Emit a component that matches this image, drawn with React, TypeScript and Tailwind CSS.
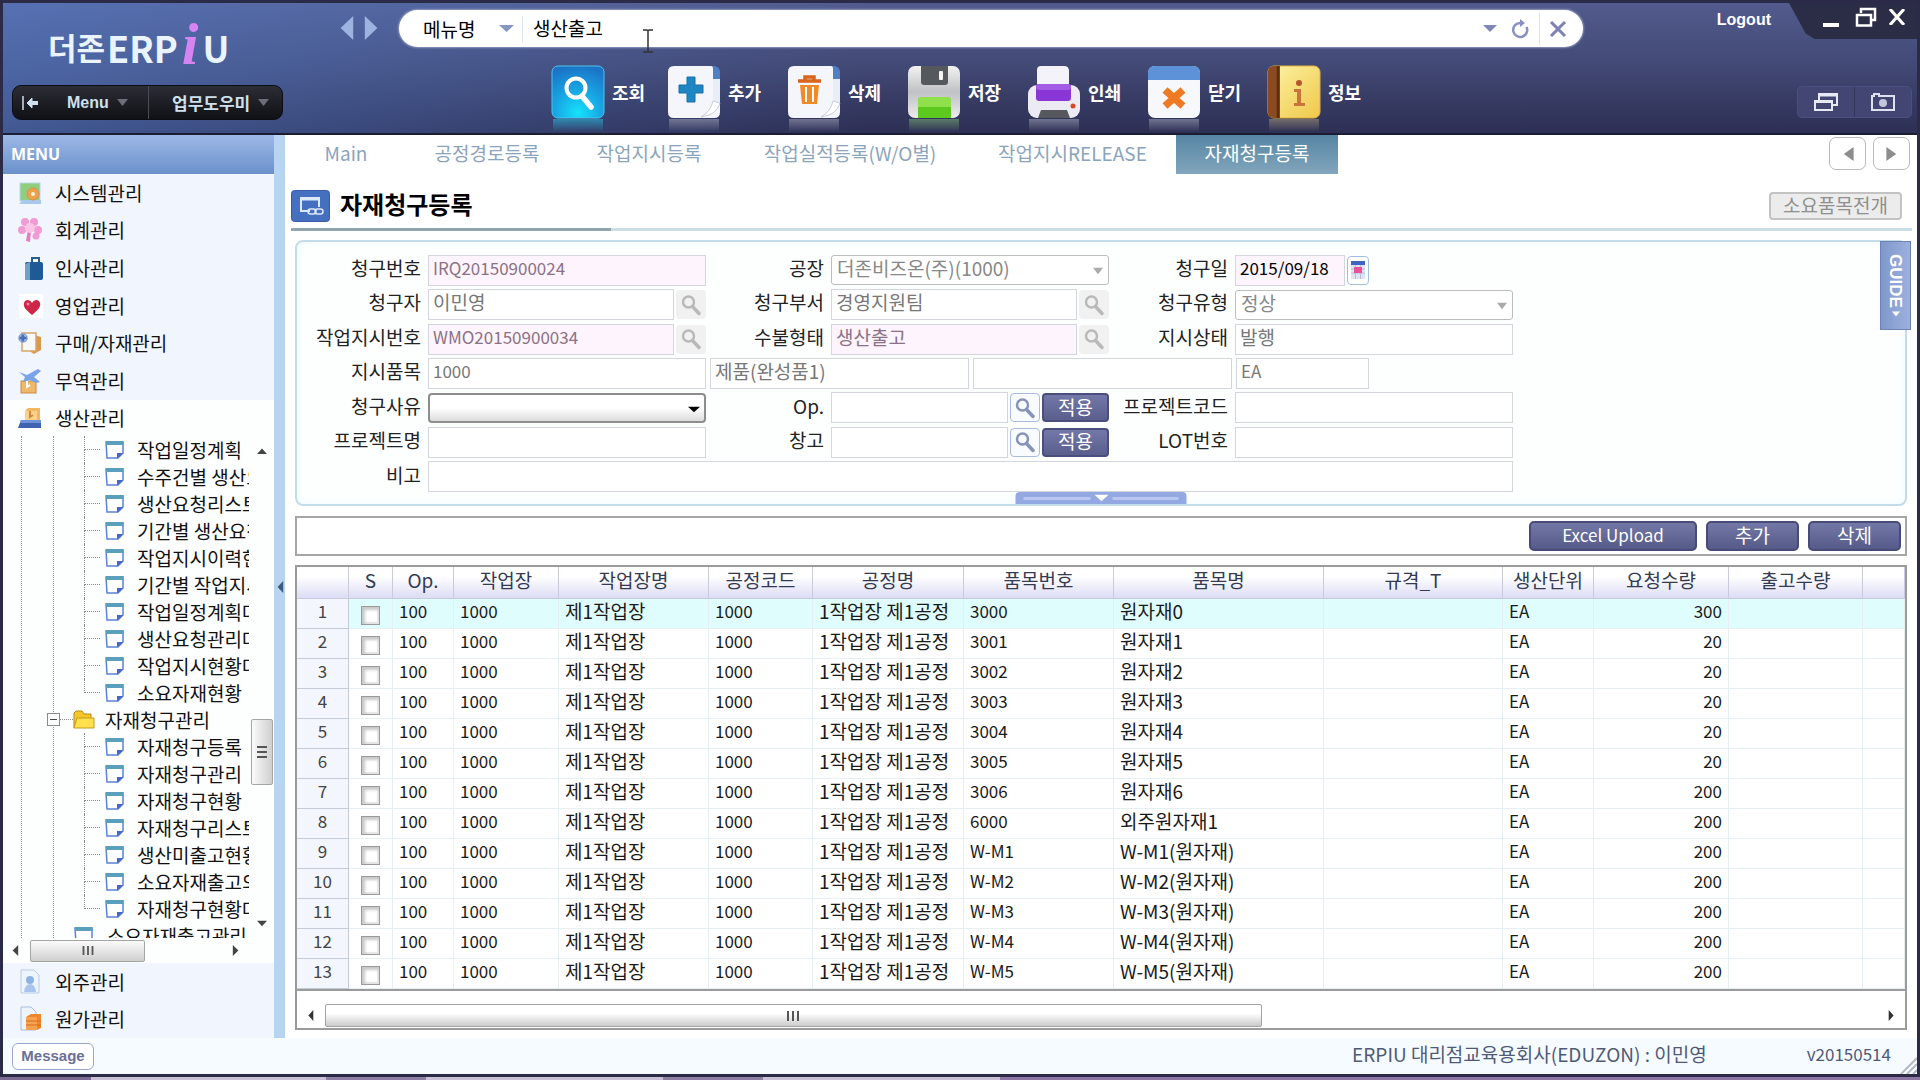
import React from "react";

/* ---------- small shared drawings ---------- */

type TriProps = { dir: "up" | "down" | "left" | "right"; className: string };

const triPoints = {
  up: "0,10 10,10 5,2",
  down: "0,1 10,1 5,9",
  left: "9,0 9,10 2,5",
  right: "1,0 1,10 8,5",
};

function Tri({ dir, className }: TriProps) {
  return (
    <svg viewBox="0 0 10 10" preserveAspectRatio="none" className={className} fill="currentColor" aria-hidden="true">
      <polygon points={triPoints[dir]} />
    </svg>
  );
}

function Magnifier({ className }: { className: string }) {
  return (
    <svg viewBox="0 0 24 24" className={className} fill="none" stroke="currentColor" aria-hidden="true">
      <circle cx="9.500" cy="9" r="5.500" strokeWidth="2.500" />
      <path d="M13.500 13.500 L20 20.500" strokeWidth="3.500" strokeLinecap="round" />
    </svg>
  );
}

/* ---------- header toolbar icons ---------- */

function SearchTool() {
  return (
    <svg viewBox="0 0 54 54" className="h-[54px] w-[54px]" aria-hidden="true">
      <defs>
        <radialGradient id="gSearch" cx="0.5" cy="0.9" r="0.9">
          <stop offset="0" stopColor="#14e3fb" />
          <stop offset="0.5" stopColor="#18a5e4" />
          <stop offset="1" stopColor="#1b74c6" />
        </radialGradient>
      </defs>
      <rect x="1" y="1" width="52" height="52" rx="6" fill="url(#gSearch)" stroke="#4fc4f0" />
      <circle cx="25" cy="23" r="9.500" fill="none" stroke="#fff" strokeWidth="4" />
      <path d="M31 31 L40 42" stroke="#fff" strokeWidth="5.500" strokeLinecap="round" />
    </svg>
  );
}

function Paper() {
  return (
    <>
      <rect x="10" y="1" width="43" height="50" rx="6" fill="#4f7fc4" />
      <path d="M7 1 H44 Q46 1 46 4 V14 H53 V47 Q53 53 47 53 H7 Q1 53 1 47 V7 Q1 1 7 1Z" fill="#f4f6fb" />
      <path d="M46 14 V34 Q44 46 34 52 Q48 50 53 38 V14Z" fill="#e9edf5" />
      <path d="M34 52 Q44 46 46 36 L53 38 Q50 50 34 52Z" fill="#fff" stroke="#b9c2d4" strokeWidth="0.8" />
    </>
  );
}

function AddTool() {
  return (
    <svg viewBox="0 0 54 54" className="h-[54px] w-[54px]" aria-hidden="true">
      <Paper />
      <path d="M20 12 H28 V20 H36 V28 H28 V37 H20 V28 H12 V20 H20Z" fill="#1f86c4" stroke="#1a6ea8" />
    </svg>
  );
}

function DeleteTool() {
  return (
    <svg viewBox="0 0 54 54" className="h-[54px] w-[54px]" aria-hidden="true">
      <Paper />
      <path d="M11 16 H34 M18 16 V12 H27 V16" fill="none" stroke="#d9641c" strokeWidth="3.500" />
      <path d="M13 20 H32 L30 39 H15Z" fill="#f08a28" />
      <path d="M19 22 V37 M26 22 V37" stroke="#fff" strokeWidth="2" />
    </svg>
  );
}

function SaveTool() {
  return (
    <svg viewBox="0 0 54 54" className="h-[54px] w-[54px]" aria-hidden="true">
      <defs>
        <linearGradient id="gSave" x1="0" y1="0" x2="0" y2="1">
          <stop offset="0" stopColor="#f2f2f2" />
          <stop offset="0.5" stopColor="#bfc1c4" />
          <stop offset="1" stopColor="#ececec" />
        </linearGradient>
      </defs>
      <rect x="1" y="1" width="52" height="52" rx="7" fill="url(#gSave)" />
      <path d="M14 1 H41 V17 Q41 20 38 20 H17 Q14 20 14 17Z" fill="#55585c" />
      <rect x="32" y="6" width="4" height="9" rx="1" fill="#f4f4f4" />
      <path d="M15 32 H40 Q44 32 44 36 V53 H11 V36 Q11 32 15 32Z" fill="#5cc91f" />
      <path d="M15 32 H40 Q44 32 44 36 V42 H11 V36 Q11 32 15 32Z" fill="#8fe04b" />
    </svg>
  );
}

function PrintTool() {
  return (
    <svg viewBox="0 0 54 54" className="h-[54px] w-[54px]" aria-hidden="true">
      <rect x="1" y="20" width="52" height="33" rx="9" fill="#eceaf2" />
      <path d="M14 1 H37 Q42 1 42 6 V22 H10 V5 Q10 1 14 1Z" fill="#f5f3fa" />
      <rect x="9" y="19" width="35" height="17" rx="3" fill="#8a35d6" />
      <rect x="9" y="19" width="35" height="6" rx="3" fill="#a35ce6" />
      <path d="M14 45 H40 L43 53 H11Z" fill="#57585e" />
      <circle cx="46" cy="41" r="2.500" fill="#d9482b" />
    </svg>
  );
}

function CloseTool() {
  return (
    <svg viewBox="0 0 54 54" className="h-[54px] w-[54px]" aria-hidden="true">
      <rect x="1" y="1" width="52" height="52" rx="7" fill="#f6f8fc" />
      <path d="M8 1 H46 Q53 1 53 8 V15 H1 V8 Q1 1 8 1Z" fill="#5d92d8" />
      <path d="M18 25 L36 41 M36 25 L18 41" stroke="#ee7a23" strokeWidth="7.500" />
    </svg>
  );
}

function InfoTool() {
  return (
    <svg viewBox="0 0 54 54" className="h-[54px] w-[54px]" aria-hidden="true">
      <defs>
        <linearGradient id="gInfo" x1="0" y1="0" x2="1" y2="1">
          <stop offset="0" stopColor="#fdf3a6" />
          <stop offset="1" stopColor="#efc84a" />
        </linearGradient>
      </defs>
      <rect x="1" y="1" width="52" height="52" rx="6" fill="url(#gInfo)" stroke="#e0b440" />
      <path d="M7 1 H13 V53 H7 Q1 53 1 47 V7 Q1 1 7 1Z" fill="#8a4a22" />
      <path d="M11 1 V53" stroke="#5d2c12" strokeWidth="2.500" />
      <circle cx="32" cy="18" r="3" fill="#b4562a" />
      <path d="M27 24 H34 V38 H38 V41 H27 V38 H30 V27 H27Z" fill="#c8743a" />
    </svg>
  );
}

const tools = [
  { label: "조회", icon: <SearchTool />, glow: "from-[#2aa5c9]" },
  { label: "추가", icon: <AddTool />, glow: "from-[#8c8ea6]" },
  { label: "삭제", icon: <DeleteTool />, glow: "from-[#8c8ea6]" },
  { label: "저장", icon: <SaveTool />, glow: "from-[#6d9a6c]" },
  { label: "인쇄", icon: <PrintTool />, glow: "from-[#8c8ea6]" },
  { label: "닫기", icon: <CloseTool />, glow: "from-[#8c8ea6]" },
  { label: "정보", icon: <InfoTool />, glow: "from-[#8f8570]" },
];

function Header() {
  return (
    <header className="h-[132px] border-b-2 border-[#1b1d33] bg-linear-to-b from-[#525b8d] via-[#414874] to-[#2d2f54] text-white">
      <div className="flex h-full bg-linear-to-r from-[#5a8be0]/45 via-[#5a8be0]/25 via-20% to-transparent to-45%">
        <div className="flex w-[330px] shrink-0 flex-col justify-between pb-[13px] pl-[9px]">
          <div className="flex h-[65px] items-end pl-[36px] text-[36px] leading-[42px] font-bold text-[#eaf4ff]">
            <span className="text-[31px]">더존</span>
            <span className="pl-0.5">ERP</span>
            <span className="px-1 font-['Liberation_Serif',serif] text-[60px] leading-[48px] text-[#d684f2] italic">i</span>
            <span>U</span>
          </div>
          <div className="flex h-[35px] w-[271px] rounded-[9px] border border-[#0c0d12] bg-linear-to-b from-[#2c2e36] to-[#101116] text-[16px] font-bold text-[#cfe0ee]">
            <button className="flex w-[136px] items-center border-r border-[#494b55] pl-[9px]">
              <svg viewBox="0 0 18 14" className="h-[14px] w-[18px]" fill="none" stroke="currentColor" strokeWidth="2" aria-hidden="true">
                <path d="M1 0 V14" strokeWidth="1.500" />
                <path d="M16 7 H8" strokeWidth="4" />
                <path d="M5 7 L10 2 V12Z" fill="currentColor" strokeWidth="1" />
              </svg>
              <span className="pl-[27px] font-['Liberation_Sans',sans-serif]">Menu</span>
              <Tri dir="down" className="ml-2 h-[9px] w-[11px] text-[#6b6e79]" />
            </button>
            <button className="flex flex-1 items-center pl-[23px]">
              <span className="text-[17px]">업무도우미</span>
              <Tri dir="down" className="ml-2 h-[9px] w-[11px] text-[#6b6e79]" />
            </button>
          </div>
        </div>

        <div className="flex min-w-0 flex-1 flex-col">
          <div className="flex items-start pt-[7px]">
            <button aria-label="이전" className="mt-1.5 ml-1">
              <Tri dir="left" className="h-6 w-[18px] text-[#9db3e0]" />
            </button>
            <button aria-label="다음" className="mt-1.5 ml-2">
              <Tri dir="right" className="h-6 w-[18px] text-[#9db3e0]" />
            </button>
            <div className="ml-[18px] flex h-[37px] min-w-0 flex-1 items-center rounded-full bg-white pl-[24px] text-[19px] text-black shadow-[0_0_2px_1px_#8f98bb]">
              <div className="relative flex w-[100px] items-center border-r border-[#dde6f0]">
                <select aria-label="검색 구분" className="w-full appearance-none bg-transparent leading-[26px] outline-none">
                  <option>메뉴명</option>
                </select>
                <Tri dir="down" className="pointer-events-none absolute right-2 h-[9px] w-[15px] text-[#8796c4]" />
              </div>
              <div className="relative min-w-0 flex-1">
                <input aria-label="메뉴 검색" defaultValue="생산출고" className="w-full pl-[10px] leading-[26px] outline-none" />
                <svg viewBox="0 0 10 24" className="absolute top-[15px] left-[120px] h-6 w-[10px]" fill="none" stroke="#333" strokeWidth="1.500" aria-hidden="true">
                  <path d="M0 1 H4 L5 2 L6 1 H10 M5 2 V22 M0 23 H4 L5 22 L6 23 H10" />
                </svg>
              </div>
              <Tri dir="down" className="h-[9px] w-[14px] text-[#8186b8]" />
              <button aria-label="새로고침" className="ml-[13px]">
                <svg viewBox="0 0 20 20" className="h-5 w-5" fill="none" stroke="#8b90c0" strokeWidth="2.500" aria-hidden="true">
                  <path d="M16.500 8 A7 7 0 1 1 10.500 4" />
                  <path d="M10 0 L15 4 L10 8Z" fill="#8b90c0" stroke="none" />
                </svg>
              </button>
              <button aria-label="지우기" className="mr-[16px] ml-[9px] border-l border-[#dde2ee] py-2 pl-[9px]">
                <svg viewBox="0 0 16 16" className="h-[16px] w-[18px]" stroke="#7d82b4" strokeWidth="3" aria-hidden="true">
                  <path d="M1 1 L15 15 M15 1 L1 15" />
                </svg>
              </button>
            </div>
          </div>

          <div className="mt-[18px] flex pl-[218px]">
            {tools.map((t, i) => (
              <div key={t.label} className={i === 0 ? "w-[116px] shrink-0" : "w-[120px] shrink-0"}>
                <button className="flex items-center gap-[7px] text-[18px] font-bold whitespace-nowrap">
                  {t.icon}
                  <span>{t.label}</span>
                </button>
                <div className={`ml-0.5 h-[13px] w-[50px] bg-linear-to-b to-transparent opacity-70 ${t.glow}`} />
              </div>
            ))}
          </div>
        </div>

        <div className="flex w-[334px] shrink-0 flex-col items-end justify-between pb-[15px]">
          <div className="flex items-start">
            <a href="#logout" className="mt-[5px] mr-[18px] font-['Liberation_Sans',sans-serif] text-[16px] font-bold">
              Logout
            </a>
            <div className="flex h-[36px] w-[128px] items-center bg-[#2b2d47] pb-2 pl-[34px] [clip-path:polygon(0_0,100%_0,100%_100%,20%_100%,13%_85%)]">
              <button aria-label="최소화" className="mt-[16px] h-1 w-4 bg-white" />
              <button aria-label="이전 크기로" className="ml-[16px]">
                <svg viewBox="0 0 22 20" className="h-5 w-[22px]" fill="none" stroke="#fff" strokeWidth="2.500" aria-hidden="true">
                  <path d="M6 6 V2 H20 V13 H16" />
                  <rect x="2" y="8" width="14" height="10.500" />
                </svg>
              </button>
              <button aria-label="창 닫기" className="ml-[12px]">
                <svg viewBox="0 0 16 16" className="h-4 w-4" stroke="#fff" strokeWidth="3" aria-hidden="true">
                  <path d="M1 0 L15 16 M15 0 L1 16" />
                </svg>
              </button>
            </div>
          </div>
          <div className="mr-[5px] flex h-[32px] w-[115px] rounded-[5px] border border-[#4c5080] bg-[#434673]">
            <button aria-label="창 목록" className="flex flex-1 items-center justify-center border-r border-[#33355c]">
              <svg viewBox="0 0 26 20" className="h-5 w-[26px]" fill="none" stroke="#e6e8f6" strokeWidth="2" aria-hidden="true">
                <path d="M6 8 V2 H24 V13 H19" />
                <path d="M6 3 H24" strokeWidth="3" />
                <rect x="2" y="9" width="17" height="9" />
                <path d="M2 9.500 H19" strokeWidth="3" />
              </svg>
            </button>
            <button aria-label="화면 캡처" className="flex flex-1 items-center justify-center">
              <svg viewBox="0 0 24 18" className="h-[18px] w-6" fill="none" stroke="#dfe1f0" strokeWidth="2" aria-hidden="true">
                <path d="M1 3 H3 V1 H8 V3 H23 V17 H1Z" />
                <circle cx="12" cy="10" r="4" fill="#c3c6dd" stroke="none" />
              </svg>
            </button>
          </div>
        </div>
      </div>
    </header>
  );
}

/* ---------- sidebar ---------- */

const sideIcon = "h-[26px] w-[26px]";

const icons = {
  system: (
    <svg viewBox="0 0 26 26" className={sideIcon} aria-hidden="true">
      <rect x="3" y="3" width="20" height="18" fill="#8fce7c" stroke="#b9d6ec" />
      <path d="M2 24 L6 20 H24 V24Z" fill="#a9c8ef" />
      <circle cx="16" cy="14" r="6" fill="#f0a04a" stroke="#d98f45" />
      <circle cx="16" cy="14" r="2" fill="#fff2dc" />
    </svg>
  ),
  flower: (
    <svg viewBox="0 0 26 26" className={sideIcon} fill="#f29ad3" aria-hidden="true">
      <circle cx="8" cy="5" r="4" />
      <circle cx="17" cy="5" r="4" />
      <circle cx="21" cy="13" r="4" />
      <circle cx="5" cy="13" r="4" />
      <circle cx="19" cy="19" r="3.500" />
      <path d="M11 12 L9 24 L13 25 L14 13Z" fill="#e77cc2" />
      <circle cx="13" cy="11" r="5" fill="#fbc4e6" />
    </svg>
  ),
  bag: (
    <svg viewBox="0 0 26 26" className={sideIcon} aria-hidden="true">
      <path d="M15 7 V3 H22 V7" fill="none" stroke="#2a5c8e" strokeWidth="2" />
      <rect x="8" y="7" width="18" height="18" rx="2" fill="#1f5a94" />
      <path d="M8 9 L13 7 V25 H8Z" fill="#6fa0cc" />
    </svg>
  ),
  heart: (
    <svg viewBox="0 0 26 26" className={sideIcon} aria-hidden="true">
      <rect x="2" y="1" width="24" height="24" fill="#fff" />
      <path d="M15 22 C9 17 6 14 7 10 C8 6 13 6 15 10 C17 6 22 6 23 10 C24 14 21 17 15 22Z" fill="#cf2648" />
      <circle cx="11" cy="11" r="1.500" fill="#f08aa0" />
    </svg>
  ),
  purchase: (
    <svg viewBox="0 0 26 26" className={sideIcon} aria-hidden="true">
      <path d="M14 4 L24 7 V20 L17 24 L14 22Z" fill="#d99a4e" />
      <rect x="5" y="3" width="14" height="18" fill="#f6f8fc" stroke="#d8a566" strokeWidth="1.500" />
      <path d="M2 8 H10 M6 4 V12" stroke="#4a6fb8" strokeWidth="3" />
      <circle cx="6" cy="8" r="4" fill="none" stroke="#7e9cd2" strokeWidth="1.500" />
    </svg>
  ),
  trade: (
    <svg viewBox="0 0 26 26" className={sideIcon} aria-hidden="true">
      <rect x="4" y="13" width="15" height="12" fill="#f0b86a" stroke="#c98b3d" />
      <path d="M10 13 V19 L13 17" fill="none" stroke="#fff" strokeWidth="2" />
      <path d="M2 4 L10 7 L21 1 L24 3 L17 9 L23 14 L19 15 L13 12 L6 14 L8 9Z" fill="#7aa4e8" />
    </svg>
  ),
  produce: (
    <svg viewBox="0 0 26 26" className={sideIcon} aria-hidden="true">
      <path d="M8 6 L11 3 H23 V15 H8Z" fill="#f2b75f" />
      <path d="M8 6 H20 V17 H8Z" fill="#ffd089" />
      <path d="M13 6 V12 L16 10" fill="none" stroke="#c98b3d" strokeWidth="2" />
      <path d="M1 23 L4 15 H24 V23Z" fill="#3e62b0" />
      <path d="M4 15 H24 V18 H3Z" fill="#6f92d6" />
    </svg>
  ),
  person: (
    <svg viewBox="0 0 26 26" className={sideIcon} aria-hidden="true">
      <path d="M4 1 H17 L22 6 V24 H4Z" fill="#eef4fd" stroke="#b9cbe6" />
      <circle cx="13" cy="11" r="4" fill="#8fb2e6" />
      <path d="M7 23 Q8 15 13 15 Q18 15 19 23Z" fill="#a9c5ee" />
    </svg>
  ),
  cost: (
    <svg viewBox="0 0 26 26" className={sideIcon} aria-hidden="true">
      <path d="M4 1 H14 L19 6 V24 H4Z" fill="#eef4fd" stroke="#a9bcda" />
      <path d="M9 11 L14 8 H24 V22 L20 24 H9Z" fill="#f0862c" />
      <path d="M9 11 H20 V24 H9Z" fill="#f7a250" />
      <path d="M9 15 H24 M9 19 H24" stroke="#d86c16" />
    </svg>
  ),
};

const topMenus = [
  { label: "시스템관리", icon: icons.system },
  { label: "회계관리", icon: icons.flower },
  { label: "인사관리", icon: icons.bag },
  { label: "영업관리", icon: icons.heart },
  { label: "구매/자재관리", icon: icons.purchase },
  { label: "무역관리", icon: icons.trade },
];

const bottomMenus = [
  { label: "외주관리", icon: icons.person },
  { label: "원가관리", icon: icons.cost },
];

const upperTree = [
  "작업일정계획",
  "수주건별 생산요청",
  "생산요청리스트",
  "기간별 생산요청",
  "작업지시이력현황",
  "기간별 작업지시",
  "작업일정계획대비",
  "생산요청관리대장",
  "작업지시현황대비",
  "소요자재현황",
];

const lowerTree = [
  "자재청구등록",
  "자재청구관리",
  "자재청구현황",
  "자재청구리스트",
  "생산미출고현황",
  "소요자재출고의뢰",
  "자재청구현황대비",
];

function DocIcon() {
  return (
    <svg viewBox="0 0 20 20" className="h-5 w-5 shrink-0" aria-hidden="true">
      <path d="M1 2 H18 V13 L13 18 H2 Z" fill="#fff" stroke="#5b83d6" strokeWidth="1.500" />
      <path d="M1 1 H18.500 V5 H1Z" fill="#5aa0bd" />
      <path d="M12 18.500 V13 H18.500Z" fill="#4667c8" />
    </svg>
  );
}

function MenuRow({ label, icon }: { label: string; icon: React.ReactNode }) {
  return (
    <button className="flex w-full items-center gap-3 pl-[14px] text-left">
      {icon}
      <span>{label}</span>
    </button>
  );
}

function Leaf({ label, last }: { label: string; last: boolean }) {
  return (
    <li className="flex h-[27px] items-center pl-[81px]">
      <span className="flex w-[21px] shrink-0 flex-col self-stretch">
        <span className="w-[16px] flex-1 border-b border-l border-dotted border-[#8a8a8a]" />
        <span className={last ? "flex-1" : "w-[16px] flex-1 border-l border-dotted border-[#8a8a8a]"} />
      </span>
      <DocIcon />
      <a href="#menu" className="shrink-0 pl-3 whitespace-nowrap">
        {label}
      </a>
    </li>
  );
}

function Grip({ className }: { className: string }) {
  return (
    <svg viewBox="0 0 12 10" className={className} stroke="#555" strokeWidth="2" aria-hidden="true">
      <path d="M1 0 V10 M6 0 V10 M11 0 V10" />
    </svg>
  );
}

function Sidebar() {
  return (
    <aside className="flex w-[271px] shrink-0 flex-col bg-[#f0f5fe] text-[19px] text-[#111]">
      <h2 className="flex h-[39px] items-center border-b border-[#6f92c8] bg-linear-to-b from-[#9db8e6] to-[#6c92cc] pl-2 font-['Open_Sans',sans-serif] text-[16px] font-bold text-white">
        MENU
      </h2>
      <nav className="grid h-[226px] grid-rows-6">
        {topMenus.map((m) => (
          <MenuRow key={m.label} label={m.label} icon={m.icon} />
        ))}
      </nav>
      <div className="flex flex-1 flex-col bg-[#fdfefe]">
        <div className="grid h-9">
          <MenuRow label="생산관리" icon={icons.produce} />
        </div>
        <div className="flex flex-1">
          <ul className="relative h-[502px] min-w-0 flex-1 overflow-hidden leading-[27px]">
            <li aria-hidden="true" className="absolute inset-y-0 left-[18px] border-l border-dotted border-[#999]" />
            <li aria-hidden="true" className="absolute inset-y-0 left-[50px] border-l border-dotted border-[#999]" />
            {upperTree.map((t, i) => (
              <Leaf key={t} label={t} last={i === upperTree.length - 1} />
            ))}
            <li className="relative flex h-[27px] items-center pl-[44px]">
              <button aria-label="접기" className="flex h-[13px] w-[13px] items-center justify-center border border-[#8a8a8a] bg-white">
                <span className="h-px w-[7px] bg-[#444]" />
              </button>
              <span className="w-[13px] border-b border-dotted border-[#8a8a8a]" />
              <svg viewBox="0 0 22 20" className="h-5 w-[22px] shrink-0" aria-hidden="true">
                <path d="M1 18 V3 L3 1 H9 L11 4 H18 V8" fill="#f3c62c" stroke="#b98a10" />
                <path d="M4 8 H21 V18 H1Z" fill="#ffe04d" stroke="#c79a18" />
              </svg>
              <a href="#menu" className="pl-[10px] whitespace-nowrap">
                자재청구관리
              </a>
            </li>
            {lowerTree.map((t, i) => (
              <Leaf key={t} label={t} last={i === lowerTree.length - 1} />
            ))}
            <li className="flex h-[27px] items-center pl-[71px]">
              <DocIcon />
              <a href="#menu" className="shrink-0 pl-[13px] whitespace-nowrap">
                소요자재출고관리
              </a>
            </li>
          </ul>
          <div className="flex w-[25px] flex-col items-center py-[11px] text-[#444]">
            <Tri dir="up" className="h-[7px] w-[10px]" />
            <span className="flex-[262]" />
            <span className="flex h-[66px] w-[22px] items-center justify-center rounded-[2px] border border-[#a5a5a5] bg-linear-to-r from-[#fbfbfb] to-[#cfcfcf]">
              <Grip className="h-[10px] w-[12px] rotate-90" />
            </span>
            <span className="flex-[134]" />
            <Tri dir="down" className="h-[7px] w-[10px]" />
          </div>
        </div>
        <div className="flex h-[25px] items-center pr-[34px] pl-[8px] text-[#444]">
          <Tri dir="left" className="h-[11px] w-[8px]" />
          <span className="ml-[11px] flex h-[22px] w-[115px] items-center justify-center rounded-[2px] border border-[#a5a5a5] bg-linear-to-b from-[#fbfbfb] to-[#cfcfcf]">
            <Grip className="h-[9px] w-[12px]" />
          </span>
          <span className="flex-1" />
          <Tri dir="right" className="h-[11px] w-[8px]" />
        </div>
      </div>
      <nav className="grid h-[75px] grid-rows-2">
        {bottomMenus.map((m) => (
          <MenuRow key={m.label} label={m.label} icon={m.icon} />
        ))}
      </nav>
    </aside>
  );
}

/* ---------- tab strip and title ---------- */

const tabs = [
  { label: "Main", cls: "w-[122px]" },
  { label: "공정경로등록", cls: "w-[160px]" },
  { label: "작업지시등록", cls: "w-[164px]" },
  { label: "작업실적등록(W/O별)", cls: "w-[238px]" },
  { label: "작업지시RELEASE", cls: "w-[207px]" },
];

function TabStrip() {
  return (
    <div className="flex h-[39px] items-stretch text-[19px] text-[#8ba4bc]">
      {tabs.map((t) => (
        <button key={t.label} className={`${t.cls} pb-[2px] whitespace-nowrap`}>
          {t.label}
        </button>
      ))}
      <button className="w-[162px] bg-linear-to-b from-[#5685a3] to-[#82a6bd] pb-[2px] whitespace-nowrap text-white">자재청구등록</button>
      <div className="ml-auto flex gap-[7px] py-[2px] pr-[7px]">
        <button aria-label="이전 탭" className="flex h-[33px] w-[37px] items-center justify-center rounded-[7px] border border-[#b9b9b9] bg-white">
          <Tri dir="left" className="h-[14px] w-[14px] text-[#8d8d8d]" />
        </button>
        <button aria-label="다음 탭" className="flex h-[33px] w-[37px] items-center justify-center rounded-[7px] border border-[#b9b9b9] bg-white">
          <Tri dir="right" className="h-[14px] w-[14px] text-[#8d8d8d]" />
        </button>
      </div>
    </div>
  );
}

function TitleBar() {
  return (
    <div className="mt-[14px] mr-[5px] ml-[6px]">
      <div className="flex h-[40px] items-center pr-[10px] pb-[4px]">
        <svg viewBox="0 0 39 32" className="h-[32px] w-[39px]" aria-hidden="true">
          <rect x="0.500" y="0.500" width="38" height="31" rx="3" fill="#4570bf" stroke="#3a5ba8" />
          <path d="M19 21 H10 V8 H28 V17" fill="none" stroke="#dce8fb" strokeWidth="2" />
          <path d="M10 9 H28" stroke="#dce8fb" strokeWidth="3" />
          <rect x="17" y="19" width="8" height="5" rx="2.500" fill="none" stroke="#dce8fb" strokeWidth="1.500" />
          <rect x="24" y="19" width="8" height="5" rx="2.500" fill="none" stroke="#dce8fb" strokeWidth="1.500" />
        </svg>
        <h1 className="flex-1 pb-[4px] pl-[10px] text-[24px] leading-[32px] font-bold text-black">자재청구등록</h1>
        <button className="h-[28px] w-[133px] rounded-[4px] border-2 border-[#c3c3c3] bg-[#ececec] pb-[2px] text-[19px] leading-[22px] text-[#8f8f8f]">
          소요품목전개
        </button>
      </div>
      <div className="flex h-[3px] bg-[#cbdde6]">
        <span className="w-[320px] bg-[#91a5b1]" />
      </div>
    </div>
  );
}

/* ---------- request form ---------- */

const shell = "h-[31px] min-w-0 border border-[#d3d7dd] pb-[6px] pl-[4px] leading-[24px] outline-none";
const plain = shell + " bg-white text-[19px] text-[#777]";
const plainCode = shell + " bg-white text-[17px] text-[#777]";
const pink = shell + " bg-[#fdf4fd] text-[19px] text-[#8b7285]";
const pinkCode = shell + " bg-[#fdf4fd] text-[17px] text-[#8b7285]";

function Label({ htmlFor, cls, children }: { htmlFor: string; cls: string; children: React.ReactNode }) {
  return (
    <label htmlFor={htmlFor} className={`${cls} shrink-0 pr-[7px] pb-[4px] text-right whitespace-nowrap`}>
      {children}
    </label>
  );
}

function FindButton({ on, label }: { on?: boolean; label: string }) {
  return (
    <button
      aria-label={label}
      className={
        on
          ? "flex h-[29px] w-[30px] shrink-0 items-center justify-center rounded-[4px] border border-[#a9bcdf] bg-[#f8fbff] text-[#8793b8]"
          : "flex h-[29px] w-[30px] shrink-0 items-center justify-center rounded-[4px] bg-[#f1f1f1] text-[#b9b9b9]"
      }
    >
      <Magnifier className="h-6 w-6" />
    </button>
  );
}

function Combo({ id, value }: { id: string; value: string }) {
  return (
    <div className="relative w-[278px] shrink-0">
      <select id={id} className="block h-[30px] w-full appearance-none rounded-[3px] border border-[#bdbdbd] bg-white pb-[4px] pl-[5px] leading-[24px] text-[#888]">
        <option>{value}</option>
      </select>
      <Tri dir="down" className="pointer-events-none absolute top-[12px] right-[6px] h-[8px] w-[10px] text-[#aaa]" />
    </div>
  );
}

function FindField({ id, label, value, cls }: { id: string; label: string; value: string; cls: string }) {
  return (
    <div className="flex w-[278px] shrink-0 items-center gap-[2px]">
      <input id={id} defaultValue={value} className={cls + " flex-1"} />
      <FindButton label={label + " 찾기"} />
    </div>
  );
}

function ApplyField({ id, label }: { id: string; label: string }) {
  return (
    <div className="flex w-[278px] shrink-0 items-center gap-[2px]">
      <input id={id} className={plain + " flex-1"} />
      <FindButton on label={label + " 찾기"} />
      <button className="h-[29px] w-[67px] shrink-0 rounded-[4px] border-2 border-[#4a4e7c] bg-linear-to-b from-[#7378a8] to-[#595e8d] pb-[2px] text-[19px] leading-[22px] text-white">
        적용
      </button>
    </div>
  );
}

const c1 = "w-[131px]";
const c2 = "w-[125px]";
const c3 = "w-[126px]";
const row = "flex items-center";

function RequestForm() {
  return (
    <section className="relative mt-[9px] mr-[10px] ml-[10px] rounded-[8px] border-2 border-[#c3dcea] bg-[#fdffff] pt-[11px] pb-[10px] text-[19px] text-[#222] shadow-[inset_0_0_8px_#eef8fd]">
      <div className="grid h-[241px] grid-rows-7">
        <div className={row}>
          <Label htmlFor="reqNo" cls={c1}>청구번호</Label>
          <input id="reqNo" defaultValue="IRQ20150900024" className={pinkCode + " w-[278px]"} />
          <Label htmlFor="plant" cls={c2}>공장</Label>
          <Combo id="plant" value="더존비즈온(주)(1000)" />
          <Label htmlFor="reqDate" cls={c3}>청구일</Label>
          <input id="reqDate" defaultValue="2015/09/18" className={shell + " w-[110px] bg-[#fdf4fd] text-[17px] text-black"} />
          <button aria-label="달력" className="ml-[2px] flex h-[29px] w-[22px] items-center justify-center rounded-[4px] border border-[#9fbfe0] bg-white">
            <svg viewBox="0 0 14 18" className="h-[18px] w-[14px]" aria-hidden="true">
              <rect width="14" height="18" fill="#dfe3f2" />
              <path d="M0 8 H14 M0 12 H14 M4.500 4 V18 M9.500 4 V18" stroke="#b4bbd6" />
              <rect width="14" height="4" fill="#4164c4" />
              <rect x="3" y="6" width="8" height="6" fill="#e8529b" />
            </svg>
          </button>
        </div>
        <div className={row}>
          <Label htmlFor="reqUser" cls={c1}>청구자</Label>
          <FindField id="reqUser" label="청구자" value="이민영" cls={plain} />
          <Label htmlFor="dept" cls={c2}>청구부서</Label>
          <FindField id="dept" label="청구부서" value="경영지원팀" cls={plain} />
          <Label htmlFor="reqType" cls={c3}>청구유형</Label>
          <Combo id="reqType" value="정상" />
        </div>
        <div className={row}>
          <Label htmlFor="woNo" cls={c1}>작업지시번호</Label>
          <FindField id="woNo" label="작업지시번호" value="WMO20150900034" cls={pinkCode} />
          <Label htmlFor="ioType" cls={c2}>수불형태</Label>
          <FindField id="ioType" label="수불형태" value="생산출고" cls={pink} />
          <Label htmlFor="woState" cls={c3}>지시상태</Label>
          <input id="woState" defaultValue="발행" className={plain + " w-[278px]"} />
        </div>
        <div className={row + " gap-[4px]"}>
          <div className={row}>
            <Label htmlFor="item" cls={c1}>지시품목</Label>
            <input id="item" defaultValue="1000" className={plainCode + " w-[278px]"} />
          </div>
          <input aria-label="품목명" defaultValue="제품(완성품1)" className={plain + " w-[259px]"} />
          <input aria-label="규격" className={plain + " w-[259px]"} />
          <input aria-label="단위" defaultValue="EA" className={plainCode + " w-[133px]"} />
        </div>
        <div className={row}>
          <Label htmlFor="reason" cls={c1}>청구사유</Label>
          <div className="relative w-[278px]">
            <select id="reason" className="block h-[30px] w-full appearance-none rounded-[4px] border-2 border-[#8d8d8d] bg-linear-to-b from-white from-50% to-[#dcdcdc] to-100%">
              <option />
            </select>
            <Tri dir="down" className="pointer-events-none absolute top-[13px] right-[6px] h-[7px] w-[12px] text-black" />
          </div>
          <Label htmlFor="op" cls={c2}>Op.</Label>
          <ApplyField id="op" label="Op." />
          <Label htmlFor="pjtCode" cls={c3}>프로젝트코드</Label>
          <input id="pjtCode" className={plain + " w-[278px]"} />
        </div>
        <div className={row}>
          <Label htmlFor="pjtName" cls={c1}>프로젝트명</Label>
          <input id="pjtName" className={plain + " w-[278px]"} />
          <Label htmlFor="store" cls={c2}>창고</Label>
          <ApplyField id="store" label="창고" />
          <Label htmlFor="lot" cls={c3}>LOT번호</Label>
          <input id="lot" className={plain + " w-[278px]"} />
        </div>
        <div className={row}>
          <Label htmlFor="remark" cls={c1}>비고</Label>
          <input id="remark" className={plain + " w-[1085px]"} />
        </div>
      </div>
      <button aria-label="접기" className="absolute bottom-0 left-1/2 flex h-[12px] w-[171px] -translate-x-1/2 items-center justify-center rounded-t-[4px] bg-[#94a9e2]">
        <span className="ml-2 h-[3px] flex-1 bg-[#b7c7f0]" />
        <Tri dir="down" className="mx-1 h-[8px] w-[14px] text-white" />
        <span className="mr-2 h-[3px] flex-1 bg-[#b7c7f0]" />
      </button>
      <button className="absolute -top-px -right-[6px] flex h-[89px] w-[31px] items-center justify-center gap-1 border border-[#6c83b4] bg-linear-to-r from-[#7f97cb] to-[#9db1de] font-['Liberation_Sans',sans-serif] text-[17px] font-bold text-white [writing-mode:vertical-rl]">
        GUIDE
        <Tri dir="down" className="h-[6px] w-[8px]" />
      </button>
    </section>
  );
}

/* ---------- grid ---------- */

const navy = "h-[30px] rounded-[5px] border-2 border-[#474b78] bg-linear-to-b from-[#7378a6] to-[#565a88] pb-[3px] leading-[22px] text-white";

const columns = [
  { name: "", w: "w-[52px]" },
  { name: "S", w: "w-[44px]" },
  { name: "Op.", w: "w-[61px]" },
  { name: "작업장", w: "w-[105px]" },
  { name: "작업장명", w: "w-[150px]" },
  { name: "공정코드", w: "w-[104px]" },
  { name: "공정명", w: "w-[151px]" },
  { name: "품목번호", w: "w-[150px]" },
  { name: "품목명", w: "w-[210px]" },
  { name: "규격_T", w: "w-[179px]" },
  { name: "생산단위", w: "w-[91px]" },
  { name: "요청수량", w: "w-[135px]" },
  { name: "출고수량", w: "w-[134px]" },
  { name: "", w: "" },
];

const items = [
  ["3000", "원자재0", "300"],
  ["3001", "원자재1", "20"],
  ["3002", "원자재2", "20"],
  ["3003", "원자재3", "20"],
  ["3004", "원자재4", "20"],
  ["3005", "원자재5", "20"],
  ["3006", "원자재6", "200"],
  ["6000", "외주원자재1", "200"],
  ["W-M1", "W-M1(원자재)", "200"],
  ["W-M2", "W-M2(원자재)", "200"],
  ["W-M3", "W-M3(원자재)", "200"],
  ["W-M4", "W-M4(원자재)", "200"],
  ["W-M5", "W-M5(원자재)", "200"],
];

const td = "border-r border-b border-[#e6eff2] px-[6px] pb-[5px] whitespace-nowrap";
const num = td + " text-[17px]";

function ItemGrid() {
  return (
    <section className="mt-[9px] mr-[10px] ml-[10px] border-2 border-[#9b9b9b] bg-white">
      <div className="overflow-hidden border-b-2 border-[#9b9b9b]">
        <table className="w-full table-fixed border-separate border-spacing-0 text-[19px] leading-[24px] text-[#1a1a1a]">
          <thead>
            <tr className="h-[32px]">
              {columns.map((c, i) => (
                <th
                  key={i}
                  scope="col"
                  className={`${c.w} border-r border-b border-[#c9cbdc] bg-linear-to-b from-white from-30% to-[#dcdcf5] pb-[5px] font-normal whitespace-nowrap text-[#333a52]`}
                >
                  {c.name}
                </th>
              ))}
            </tr>
          </thead>
          <tbody>
            {items.map(([code, name, qty], i) => (
              <tr key={code} className={i === 0 ? "h-[30px] bg-[#e0fdfd]" : "h-[30px] bg-white"}>
                <th scope="row" className="border-r border-b border-[#c3cbd6] bg-[#f3f7fd] pb-[5px] text-[17px] font-normal text-[#444]">
                  {i + 1}
                </th>
                <td className="border-r border-b border-[#e6eff2]">
                  <input
                    type="checkbox"
                    aria-label={`${i + 1}행 선택`}
                    className="mx-auto mt-[3px] block h-[19px] w-[19px] appearance-none border border-[#9a9a9a] bg-white shadow-[inset_3px_3px_3px_#c9c9c9,inset_-2px_-2px_1px_#e4e4e4]"
                  />
                </td>
                <td className={num}>100</td>
                <td className={num}>1000</td>
                <td className={td}>제1작업장</td>
                <td className={num}>1000</td>
                <td className={td}>1작업장 제1공정</td>
                <td className={num}>{code}</td>
                <td className={td}>{name}</td>
                <td className={td} />
                <td className={num}>EA</td>
                <td className={num + " text-right"}>{qty}</td>
                <td className={td} />
                <td className={td} />
              </tr>
            ))}
          </tbody>
        </table>
      </div>
      <div className="mt-[12px] flex h-[25px] items-center px-[10px] text-[#333]">
        <Tri dir="left" className="h-[11px] w-[7px]" />
        <span className="ml-[11px] flex h-[23px] w-[59%] items-center justify-center rounded-[2px] border border-[#a3a3a3] bg-linear-to-b from-white from-40% to-[#cbcbcb]">
          <Grip className="h-[10px] w-[12px]" />
        </span>
        <Tri dir="right" className="ml-auto h-[11px] w-[7px]" />
      </div>
    </section>
  );
}

/* ---------- page ---------- */

export default function App() {
  return (
    <div className="flex min-h-screen flex-col bg-[#c9bfd6] font-['Noto_Sans_CJK_KR',sans-serif]">
      <div className="flex flex-1 flex-col border-[3px] border-[#2b2b48] bg-white">
        <Header />
        <div className="flex flex-1">
          <Sidebar />
          <button aria-label="메뉴 숨기기" className="flex w-[11px] shrink-0 items-center justify-center bg-[#b7d5f0] text-[#3d5a80]">
            <Tri dir="left" className="h-[12px] w-[8px]" />
          </button>
          <main className="min-w-0 flex-1 bg-white">
            <TabStrip />
            <TitleBar />
            <RequestForm />
            <div className="mt-[10px] mr-[10px] ml-[10px] flex h-[40px] items-center justify-end gap-[9px] border-2 border-[#a5a5a5] bg-white pr-[4px]">
              <button className={navy + " w-[168px] text-[17px]"}>Excel Upload</button>
              <button className={navy + " w-[93px] text-[19px]"}>추가</button>
              <button className={navy + " w-[93px] text-[19px]"}>삭제</button>
            </div>
            <ItemGrid />
          </main>
        </div>
        <footer className="flex h-[36px] items-center bg-[#f6fbff] pl-[9px] text-[19px] text-[#4f5a78]">
          <button className="h-[27px] w-[82px] rounded-[6px] border border-[#9aa6cc] bg-white font-['Liberation_Sans',sans-serif] text-[15px] font-bold text-[#6a6f97]">
            Message
          </button>
          <span className="ml-auto pb-[4px]">ERPIU 대리점교육용회사(EDUZON) : 이민영</span>
          <span className="pb-[4px] pl-[100px] text-[17px]">v20150514</span>
          <svg viewBox="0 0 18 18" className="ml-[8px] h-[18px] w-[18px] self-end" stroke="#b5b9c6" strokeWidth="2" aria-hidden="true">
            <path d="M2 18 L18 2 M8 18 L18 8 M14 18 L18 14" />
          </svg>
        </footer>
      </div>
      <div className="flex h-[3px]">
        <span className="w-[91px] bg-[#7d6a92]" />
        <span className="w-[235px]" />
        <span className="w-[100px] bg-[#8f7fa3]" />
        <span className="w-[237px]" />
        <span className="w-[100px] bg-[#8f7fa3]" />
        <span className="w-[237px]" />
        <span className="flex-1 bg-[#8d76a3]" />
      </div>
    </div>
  );
}
